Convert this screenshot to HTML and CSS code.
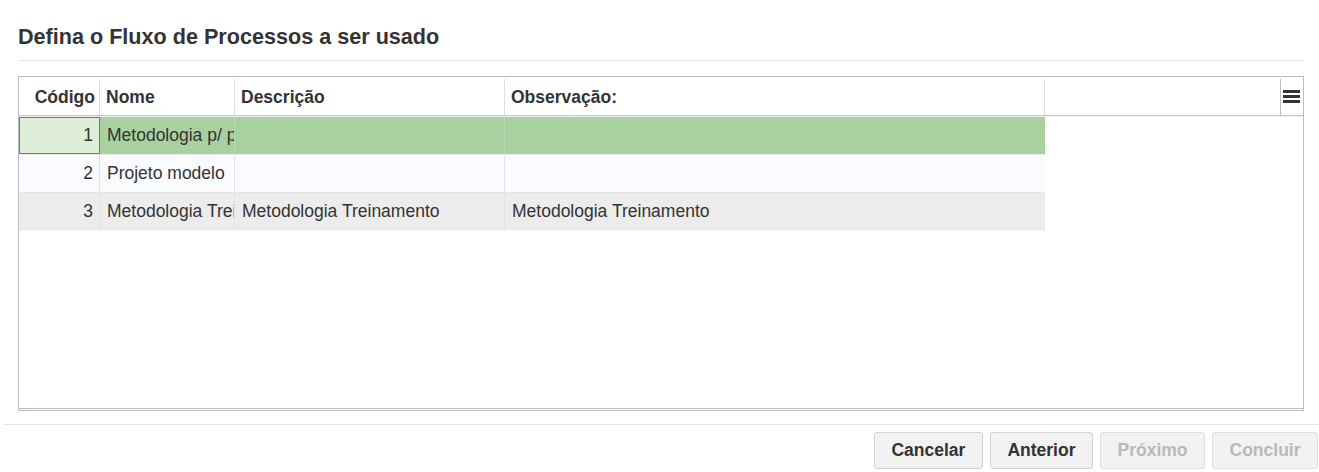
FILE: index.html
```html
<!DOCTYPE html>
<html>

<head>
	<meta charset="UTF-8">
	<title>Fluxo de Processos</title>
	<link rel="stylesheet" href="styles.css">
</head>

<body>
	<div class="dialog">
		<div class="content">
			<h1 class="title">Defina o Fluxo de Processos a ser usado</h1>

			<div class="grid">
				<div class="gridHead">
					<div class="hcell num">Código</div>
					<div class="hcell">Nome</div>
					<div class="hcell">Descrição</div>
					<div class="hcell">Observação:</div>
					<div class="hcell filler"></div>
					<div class="hcell menuCell">
						<svg width="17" height="13" viewBox="0 0 17 13">
							<rect x="0" y="0" width="17" height="3" fill="#333" />
							<rect x="0" y="5" width="17" height="3" fill="#333" />
							<rect x="0" y="10" width="17" height="3" fill="#333" />
						</svg>
					</div>
				</div>
				<div class="gridBody">
					<div class="row selected">
						<div class="cell num active">1</div>
						<div class="cell">Metodologia p/ projetos</div>
						<div class="cell"></div>
						<div class="cell last"></div>
					</div>
					<div class="row alt">
						<div class="cell num">2</div>
						<div class="cell">Projeto modelo</div>
						<div class="cell"></div>
						<div class="cell last"></div>
					</div>
					<div class="row hover">
						<div class="cell num">3</div>
						<div class="cell">Metodologia Treinamento</div>
						<div class="cell">Metodologia Treinamento</div>
						<div class="cell last">Metodologia Treinamento</div>
					</div>
				</div>
			</div>
		</div>

		<div class="footer">
			<button class="btn">Cancelar</button>
			<button class="btn">Anterior</button>
			<button class="btn" disabled>Próximo</button>
			<button class="btn" disabled>Concluir</button>
		</div>
	</div>
</body>

</html>
```

FILE: styles.css
```css
body {
	font-family: "Liberation Sans", Arial, Helvetica, sans-serif;
	font-size: 17.5px;
	color: #333;
	margin: 0;
	background: #fff;
}

.dialog {
	padding-left: 4px;
}

.content {
	padding: 0 15px 0 14px;
}

.title {
	font-size: 21.6px;
	font-weight: bold;
	line-height: 24px;
	margin: 0;
	padding: 25px 0 11px 0;
	border-bottom: 1px solid #e5e5e5;
	color: #333;
}

/* grid */
.grid {
	margin-top: 15px;
	border: 1px solid #b9bdc1;
	height: 335px;
	box-sizing: border-box;
	display: flex;
	flex-direction: column;
}

.gridHead {
	display: grid;
	grid-template-columns: 81px 135px 270px 540px 236px 22px;
	height: 38px;
	border-bottom: 1px solid #c7cacd;
	box-shadow: 0 1px 0 #eceef0;
}

.hcell {
	box-sizing: border-box;
	border-right: 1px solid #dedede;
	font-weight: bold;
	padding: 0 6px;
	display: flex;
	align-items: center;
	margin-top: 2px;
}

.hcell.num {
	justify-content: flex-end;
	padding-right: 4px;
}

.hcell.filler {
	border-right: 1px solid #b9bdc1;
}

.hcell.menuCell {
	border-right: none;
	padding: 0 0 0 2px;
	margin-top: 0;
}

.menuCell svg {
	display: block;
}

.gridBody {
	flex: 1;
	padding-top: 1px;
	border-bottom: 1px solid #b9bdc1;
	margin-bottom: 1px;
}

.row {
	display: grid;
	grid-template-columns: 81px 135px 270px 540px;
	width: 1026px;
	height: 38px;
	box-sizing: border-box;
	border-bottom: 1px solid #e4e6e8;
}

.cell {
	box-sizing: border-box;
	border-right: 1px solid #e2e2e2;
	padding: 0 6px 0 7px;
	display: flex;
	align-items: center;
	white-space: nowrap;
	overflow: hidden;
}

.cell.num {
	justify-content: flex-end;
	padding-right: 6px;
}

.cell.last {
	border-right: none;
}

.row.selected {
	background: #a9d19f;
	border-bottom-color: #e8ece9;
}

.row.selected .cell {
	border-right-color: #b7d9ae;
}

.row.selected .cell.active {
	background: #dfeed7;
	border: 1px solid #5b8c51;
}

.row.alt {
	background: #f9fbfe;
	border-bottom-color: #e2e4e6;
}

.row.hover {
	background: #ececec;
	border-bottom-color: #f4f4f4;
}

/* footer */
.footer {
	margin-top: 13px;
	border-top: 1px solid #e5e5e5;
	padding: 7px 1px 0 0;
	display: flex;
	justify-content: flex-end;
	gap: 7px;
}

.btn {
	font-family: "Liberation Sans", Arial, Helvetica, sans-serif;
	font-size: 17.5px;
	font-weight: bold;
	color: #333;
	background: #f2f2f2;
	border: 1px solid #d2d2d2;
	border-radius: 3px;
	height: 37px;
	padding: 0 16.5px;
}

.btn:disabled {
	color: #b9b9b9;
	border-color: #dedede;
}
```
